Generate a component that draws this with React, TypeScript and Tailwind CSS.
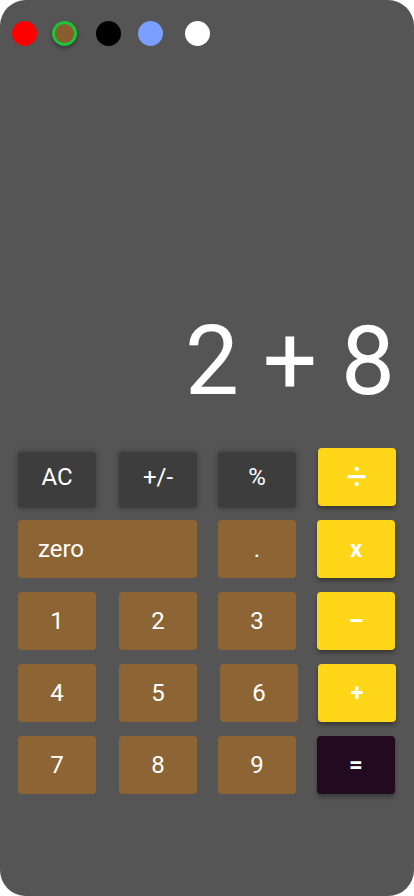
import React from 'react'

type Key = {
  label: string
  kind: 'dark' | 'brown' | 'yellow' | 'equals'
  extra?: string
}

const rows: Key[][] = [
  [
    { label: 'zero', kind: 'brown', extra: 'col-span-2 w-[179px] justify-start pl-[20px]' },
    { label: '.', kind: 'brown' },
    { label: 'x', kind: 'yellow' },
  ],
  [
    { label: '1', kind: 'brown' },
    { label: '2', kind: 'brown' },
    { label: '3', kind: 'brown' },
    { label: '–', kind: 'yellow' },
  ],
  [
    { label: '4', kind: 'brown' },
    { label: '5', kind: 'brown' },
    { label: '6', kind: 'brown', extra: 'ml-[2px]' },
    { label: '+', kind: 'yellow', extra: 'ml-px' },
  ],
  [
    { label: '7', kind: 'brown' },
    { label: '8', kind: 'brown' },
    { label: '9', kind: 'brown' },
    { label: '=', kind: 'equals' },
  ],
]

const kindClass = {
  dark: 'h-[56px] mt-[4px] pb-[6px] bg-[#3d3d3d] font-normal shadow-[0_0_4px_2px_rgba(0,0,0,0.18)]',
  brown: 'h-[58px] bg-[#8d6534] font-normal',
  yellow: 'h-[58px] bg-[#ffd618] font-bold shadow-[0_3px_4px_rgba(0,0,0,0.35)]',
  equals: 'h-[58px] bg-[#220a20] font-bold shadow-[0_3px_4px_rgba(0,0,0,0.35)]',
}

function Btn({ k }: { k: Key }) {
  return (
    <button
      className={`w-[78px] rounded-[4px] flex items-center justify-center text-white text-[24px] leading-none ${kindClass[k.kind]} ${k.extra ?? ''}`}
    >
      {k.label}
    </button>
  )
}

export default function App() {
  return (
    <div className="w-[414px] h-[896px] bg-white" style={{ fontFamily: 'Roboto, "Liberation Sans", sans-serif' }}>
      <div className="w-[414px] h-[896px] bg-[#555555] rounded-[26px] flex flex-col">
        {/* theme dots */}
        <div className="flex items-center pt-[21px] pl-[12px]">
          <span className="w-[25px] h-[25px] rounded-full bg-[#ff0000]" />
          <span className="ml-[15px] w-[25px] h-[25px] rounded-full bg-[#8a5d2e] border-[3px] border-[#1fc43a] shadow-[0_2px_4px_rgba(0,0,0,0.4)]" />
          <span className="ml-[19px] w-[25px] h-[25px] rounded-full bg-black" />
          <span className="ml-[17px] w-[25px] h-[25px] rounded-full bg-[#7a9fff]" />
          <span className="ml-[22px] w-[25px] h-[25px] rounded-full bg-white" />
        </div>

        {/* display */}
        <div className="mt-[267px] pr-[19px] text-right text-white text-[96px] leading-none font-normal">
          2 + 8
        </div>

        {/* keypad */}
        <div className="mt-[39px] px-[18px] flex flex-col">
          <div className="grid grid-cols-[101px_99px_99px_78px] items-start">
            <Btn k={{ label: 'AC', kind: 'dark' }} />
            <Btn k={{ label: '+/-', kind: 'dark' }} />
            <Btn k={{ label: '%', kind: 'dark' }} />
            <Btn k={{ label: '÷', kind: 'yellow', extra: 'ml-px text-[36px] !font-normal' }} />
          </div>
          <div className="mt-[12px] flex flex-col gap-[14px]">
            {rows.map((row, i) => (
              <div key={i} className="grid grid-cols-[101px_99px_99px_78px] items-start">
                {row.map(k => (
                  <Btn key={k.label} k={k} />
                ))}
              </div>
            ))}
          </div>
        </div>
      </div>
    </div>
  )
}
